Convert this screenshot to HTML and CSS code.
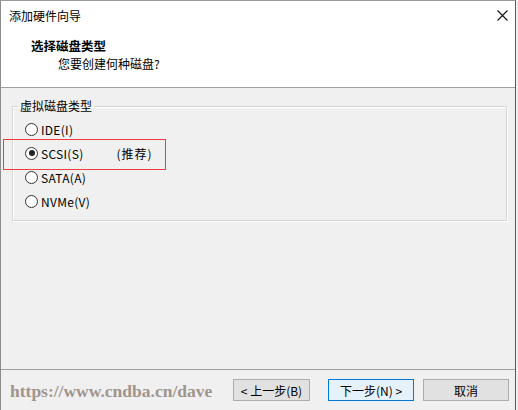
FILE: index.html
```html
<!DOCTYPE html>
<html lang="zh-CN">

<head>
    <meta charset="UTF-8">
    <meta name="viewport" content="width=device-width, initial-scale=1.0">
    <title>添加硬件向导</title>

    <link rel="stylesheet" href="styles.css">
</head>

<body>
    <div class="window">
        <div class="header">
            <div class="titlebar">
                <span class="title">添加硬件向导</span>
                <svg class="close" width="11" height="11" viewBox="0 0 11 11">
                    <path d="M0.5 0.5 L10.5 10.5 M10.5 0.5 L0.5 10.5" stroke="#111" stroke-width="1.1" fill="none" />
                </svg>
            </div>
            <div class="heading">选择磁盘类型</div>
            <div class="sub">您要创建何种磁盘?</div>
        </div>

        <div class="main">
            <fieldset class="group">
                <legend>虚拟磁盘类型</legend>
                <div class="radio-row">
                    <span class="radio"></span>
                    <span>IDE(I)</span>
                </div>
                <div class="radio-row">
                    <span class="radio checked"></span>
                    <span>SCSI(S)</span>
                    <span class="note">(推荐)</span>
                </div>
                <div class="radio-row">
                    <span class="radio"></span>
                    <span>SATA(A)</span>
                </div>
                <div class="radio-row">
                    <span class="radio"></span>
                    <span>NVMe(V)</span>
                </div>
            </fieldset>
        </div>

        <div class="footer">
            <span class="watermark">https://www.cndba.cn/dave</span>
            <div class="buttons">
                <button class="btn back">&lt; 上一步(B)</button>
                <button class="btn next">下一步(N) &gt;</button>
                <button class="btn cancel">取消</button>
            </div>
        </div>

        <!-- red highlight drawn over the SCSI option -->
        <div class="highlight"></div>
    </div>
</body>

</html>
```

FILE: styles.css
```css
body {
    margin: 0;
    background: #f0f0f0;
    font-family: "Noto Sans CJK SC", "Noto Sans", sans-serif;
    font-size: 12px;
    color: #000;
}

.window {
    position: relative;
    display: flex;
    flex-direction: column;
    box-sizing: border-box;
    width: 516px;
    height: 410px;
    border-top: 1px solid #9a9a9a;
    border-left: 1px solid #8c8c8c;
    border-right: 1px solid #5a5a5a;
    background: #f0f0f0;
}

.header {
    height: 86px;
    background: #fff;
    border-bottom: 1px solid #a0a0a0;
}

.titlebar {
    display: flex;
    justify-content: space-between;
    align-items: center;
    height: 29px;
    padding: 0 7px 0 8px;
}

.title {
    line-height: 16px;
}

.close {
    display: block;
}

.heading {
    margin-top: 7px;
    padding-left: 30px;
    font-size: 12.5px;
    font-weight: bold;
    line-height: 18px;
}

.sub {
    padding-left: 57px;
    line-height: 18px;
}

.main {
    flex: 1;
    padding-top: 10px;
}

.group {
    margin: 0 8px 0 11px;
    padding: 3px 5px 7px 5px;
    border: 1px solid #d5d5d5;
    box-shadow: inset 1px 1px 0 #fff, 1px 1px 0 #fff;
}

.group legend {
    padding: 0 2px;
    line-height: 16px;
}

.radio-row {
    display: flex;
    align-items: center;
    height: 24px;
    padding-left: 7px;
    letter-spacing: 0.3px;
}

.radio {
    position: relative;
    box-sizing: border-box;
    width: 13px;
    height: 13px;
    margin-right: 3px;
    border: 1px solid #333;
    border-radius: 50%;
    background: #fff;
}

.radio.checked::after {
    content: "";
    position: absolute;
    left: 2.5px;
    top: 2.5px;
    width: 6px;
    height: 6px;
    border-radius: 50%;
    background: #222;
}

.note {
    margin-left: 33px;
    letter-spacing: 1px;
}

.footer {
    display: flex;
    align-items: center;
    height: 40px;
    border-top: 1px solid #a0a0a0;
    padding: 0 6px 0 9px;
}

.watermark {
    font-family: "Liberation Serif", serif;
    font-size: 17.5px;
    font-weight: bold;
    color: #a0958d;
    margin-top: 2px;
}

.buttons {
    display: flex;
    margin-left: auto;
}

.btn {
    box-sizing: border-box;
    height: 22px;
    padding: 0;
    font-family: "Noto Sans CJK SC", "Noto Sans", sans-serif;
    font-size: 12px;
    color: #000;
    background: #e1e1e1;
    border: 1px solid #adadad;
}

.back {
    width: 77px;
    margin-right: 18px;
}

.next {
    width: 86px;
    margin-right: 9px;
    background: #e5f1fb;
    border-color: #0078d7;
}

.cancel {
    width: 86px;
}

.highlight {
    position: absolute;
    left: 2px;
    top: 138px;
    width: 161px;
    height: 29px;
    border: 1px solid #f03c3c;
}
```
